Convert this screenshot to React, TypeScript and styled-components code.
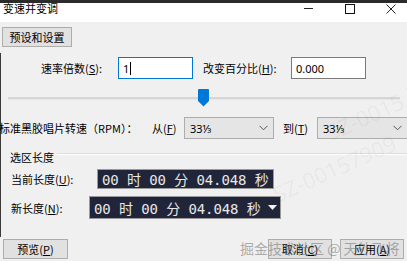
import React from "react";
import styled, { createGlobalStyle } from "styled-components";

const GlobalStyle = createGlobalStyle`
  html, body {
    margin: 0;
    padding: 0;
    background: #f0f0f0;
  }
  body {
    font-family: "Noto Sans CJK SC", "Noto Sans", sans-serif;
    font-size: 11px;
    color: #000;
  }
`;

const Window = styled.div`
  position: relative;
  width: 407px;
  height: 261px;
  overflow: hidden;
  box-sizing: border-box;
  border-top: 3px solid #2b2b2b;
  background: #f0f0f0;
`;

const TitleBar = styled.div`
  display: flex;
  align-items: flex-start;
  height: 19px;
  background: #fff;
`;

const Title = styled.div`
  flex: 1;
  height: 11px;
  line-height: 11px;
  padding-left: 3px;
`;

const Captions = styled.div`
  display: flex;
  margin-right: -4px;
`;

const CaptionButton = styled.div`
  display: flex;
  align-items: center;
  justify-content: center;
  width: 41px;
  height: 11px;
`;

const Toolbar = styled.div`
  display: flex;
  padding: 5px 0 0 2px;
`;

const Button = styled.div<{ $w: number }>`
  display: flex;
  align-items: center;
  justify-content: center;
  box-sizing: border-box;
  width: ${(p) => p.$w}px;
  height: 20px;
  background: #e1e1e1;
  border: 1px solid #adadad;
`;

const Section = styled.div`
  margin-top: 6px;
  padding: 4px 0 18px;
  border-left: 1px solid #3a3a3a;
`;

const Row = styled.div<{ $top: number; $left?: number; $h: number }>`
  display: flex;
  align-items: center;
  height: ${(p) => p.$h}px;
  margin-top: ${(p) => p.$top}px;
  padding-left: ${(p) => p.$left ?? 0}px;
`;

const Label = styled.div<{ $w: number; $shift?: number }>`
  flex: none;
  width: ${(p) => p.$w}px;
  margin-left: ${(p) => p.$shift ?? 0}px;
  white-space: nowrap;
`;

const TextBox = styled.div<{ $focused?: boolean }>`
  display: flex;
  align-items: center;
  box-sizing: border-box;
  width: 75px;
  height: 22px;
  padding-left: 4px;
  background: #fff;
  border: 1px solid ${(p) => (p.$focused ? "#0078d7" : "#7a7a7a")};
  font-family: "Noto Sans", sans-serif;
  font-size: 11px;
`;

const Caret = styled.span`
  display: inline-block;
  width: 1px;
  height: 13px;
  margin-left: 1px;
  background: #000;
`;

const SliderRow = styled.div`
  position: relative;
  display: flex;
  align-items: flex-start;
  height: 18px;
  margin-top: 10px;
  padding: 0 7px 0 7px;
`;

const Track = styled.div`
  flex: 1;
  height: 2px;
  margin-top: 8px;
  background: #d6d6d6;
  border-bottom: 1px solid #e6e6e6;
`;

const Thumb = styled.svg`
  position: absolute;
  left: 197px;
  top: 0;
`;

const Select = styled.div<{ $w: number }>`
  display: flex;
  align-items: center;
  justify-content: space-between;
  box-sizing: border-box;
  flex: none;
  width: ${(p) => p.$w}px;
  height: 22px;
  padding: 0 5px 0 5px;
  background: #e5e5e5;
  border: 1px solid #adadad;
  font-family: "Noto Sans", sans-serif;
`;

const GroupHead = styled.div`
  display: flex;
  align-items: flex-start;
  height: 14px;
  margin-top: 11px;
  padding-left: 9px;
`;

const GroupTitle = styled.div`
  line-height: 14px;
  padding-right: 3px;
`;

const GroupLine = styled.div`
  flex: 1;
  height: 1px;
  margin-top: 3px;
  background: #dcdcdc;
  border-bottom: 1px solid #fff;
`;

const TimeBox = styled.div<{ $w: number; $h: number; $pad: number }>`
  display: flex;
  align-items: center;
  justify-content: space-between;
  box-sizing: border-box;
  width: ${(p) => p.$w}px;
  height: ${(p) => p.$h}px;
  padding: 0 3px 0 ${(p) => p.$pad}px;
  background: #21253a;
  border: 1px solid #9a9a9a;
  color: #e8e8e8;
  font-family: "DejaVu Sans Mono", "Noto Sans CJK SC", monospace;
  font-size: 14px;
  letter-spacing: -0.1px;
  white-space: nowrap;
`;

const Footer = styled.div`
  display: flex;
  gap: 8px;
  margin-top: 2px;
  padding: 0 3px;
`;

const Spacer = styled.div`
  flex: 1;
`;

const Watermark = styled.div`
  position: absolute;
  left: 240px;
  top: 235px;
  font-size: 14px;
  color: rgba(110, 110, 110, 0.55);
  white-space: nowrap;
  pointer-events: none;
`;

const DiagonalMark = styled.div<{ $x: number; $y: number }>`
  position: absolute;
  left: ${(p) => p.$x}px;
  top: ${(p) => p.$y}px;
  transform: rotate(-24deg);
  font-family: "Noto Sans", sans-serif;
  font-size: 22px;
  color: rgba(0, 0, 0, 0.05);
  white-space: nowrap;
  pointer-events: none;
`;

const Chevron = () => (
  <svg width="9" height="6" viewBox="0 0 9 6">
    <path d="M0.5 0.8 L4.5 4.8 L8.5 0.8" fill="none" stroke="#555" strokeWidth="1" />
  </svg>
);

export default function App() {
  return (
    <>
      <GlobalStyle />
      <Window>
        <TitleBar>
          <Title>变速并变调</Title>
          <Captions>
            <CaptionButton>
              <svg width="9" height="9" viewBox="0 0 9 9">
                <path d="M0 4.5 H9" stroke="#222" strokeWidth="1" />
              </svg>
            </CaptionButton>
            <CaptionButton>
              <svg width="10" height="10" viewBox="0 0 10 10">
                <rect x="0.5" y="0.5" width="9" height="9" fill="none" stroke="#111" strokeWidth="1" />
              </svg>
            </CaptionButton>
            <CaptionButton>
              <svg width="10" height="10" viewBox="0 0 10 10">
                <path d="M0.5 0.5 L9.5 9.5 M9.5 0.5 L0.5 9.5" stroke="#222" strokeWidth="1" />
              </svg>
            </CaptionButton>
          </Captions>
        </TitleBar>

        <Toolbar>
          <Button $w={70}>预设和设置</Button>
        </Toolbar>

        <Section>
          <Row $top={0} $left={40} $h={22}>
            <Label $w={77}>
              速率倍数(<u>S</u>):
            </Label>
            <TextBox $focused>
              1<Caret />
            </TextBox>
            <Label $w={88} $shift={10}>
              改变百分比(<u>H</u>):
            </Label>
            <TextBox>0.000</TextBox>
          </Row>

          <SliderRow>
            <Track />
            <Thumb width="11" height="18" viewBox="0 0 11 18">
              <path d="M0 1 Q0 0 1 0 H10 Q11 0 11 1 V12 L5.5 17.5 L0 12 Z" fill="#0078d7" />
            </Thumb>
          </SliderRow>

          <Row $top={10} $h={22}>
            <Label $w={153} $shift={-2}>标准黑胶唱片转速（RPM）：</Label>
            <Label $w={32}>
              从(<u>F</u>)
            </Label>
            <Select $w={90}>
              <span>33⅓</span>
              <Chevron />
            </Select>
            <Label $w={34} $shift={9}>
              到(<u>T</u>)
            </Label>
            <Select $w={91}>
              <span>33⅓</span>
              <Chevron />
            </Select>
          </Row>

          <GroupHead>
            <GroupTitle>选区长度</GroupTitle>
            <GroupLine />
          </GroupHead>

          <Row $top={5} $left={10} $h={20}>
            <Label $w={86}>
              当前长度(<u>U</u>):
            </Label>
            <TimeBox $w={177} $h={20} $pad={4}>
              <span>00 时 00 分 04.048 秒</span>
            </TimeBox>
          </Row>

          <Row $top={7} $left={10} $h={23}>
            <Label $w={78}>
              新长度(<u>N</u>):
            </Label>
            <TimeBox $w={192} $h={23} $pad={4}>
              <span>00 时 00 分 04.048 秒</span>
              <svg width="9" height="5" viewBox="0 0 9 5">
                <path d="M0 0 H9 L4.5 5 Z" fill="#f2f2f2" />
              </svg>
            </TimeBox>
          </Row>
        </Section>

        <Footer>
          <Button $w={65}>
            预览(<u>P</u>)
          </Button>
          <Spacer />
          <Button $w={64}>
            取消(<u>C</u>)
          </Button>
          <Button $w={64}>
            应用(<u>A</u>)
          </Button>
        </Footer>

        <DiagonalMark $x={322} $y={88}>SZ-0015 以网</DiagonalMark>
        <DiagonalMark $x={268} $y={150}>SZ-00157909</DiagonalMark>
        <Watermark>掘金技术社区 @ 天外飞将</Watermark>
      </Window>
    </>
  );
}
